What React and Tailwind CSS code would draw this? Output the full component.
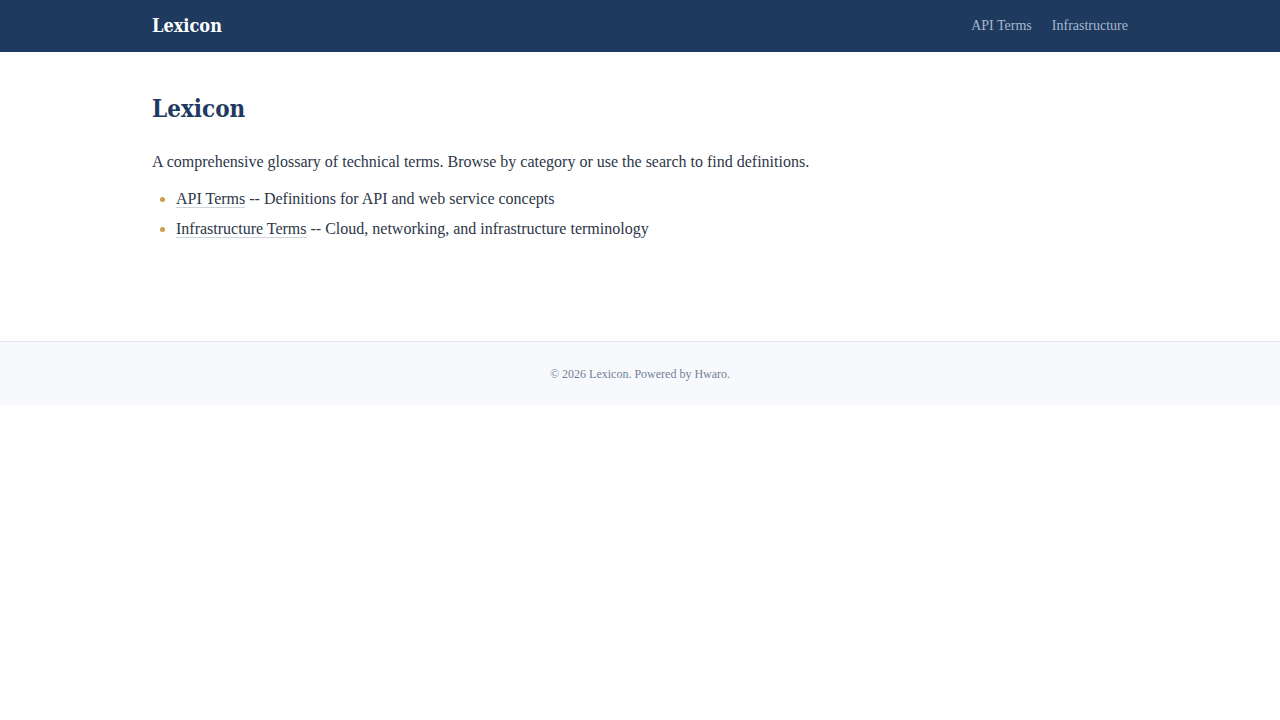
export default function App() {
  return (
    <div className="min-h-screen bg-white font-['Liberation_Serif',serif] text-[#2d3748]">
      <header className="bg-[#1e3a5f]">
        <div className="mx-auto flex h-[52px] max-w-[976px] items-center justify-between">
          <a href="#" className="-mt-px font-['DejaVu_Serif_Condensed','DejaVu_Serif',serif] font-stretch-condensed text-[18px] font-bold text-white">Lexicon</a>
          <nav className="-mt-[2px] flex gap-5 text-[14px] text-[#a9b8cc]">
            <a href="#">API Terms</a>
            <a href="#">Infrastructure</a>
          </nav>
        </div>
      </header>

      <main className="mx-auto max-w-[976px] pt-[41px] pb-[97px]">
        <h1 className="font-['DejaVu_Serif_Condensed','DejaVu_Serif',serif] font-stretch-condensed text-[24px] font-bold leading-[1.3] text-[#1e3a5f]">Lexicon</h1>
        <p className="mt-[25px] text-[16px] leading-[26px]">
          A comprehensive glossary of technical terms. Browse by category or use the search to find definitions.
        </p>
        <ul className="mt-[9px] list-disc pl-6 text-[16px] leading-[26px] marker:text-[#c9a04a]">
          <li className="py-[2px]">
            <a href="#" className="border-b border-[#cbd5e0]">API Terms</a> -- Definitions for API and web service concepts
          </li>
          <li className="py-[2px]">
            <a href="#" className="border-b border-[#cbd5e0]">Infrastructure Terms</a> -- Cloud, networking, and infrastructure terminology
          </li>
        </ul>
      </main>

      <footer className="border-t border-[#e2e8f0] bg-[#f8f9fc] pt-[23px] pb-[22px] text-center text-[12px] text-[#718096]">
        © 2026 Lexicon. Powered by <a href="#">Hwaro</a>.
      </footer>
    </div>
  );
}
